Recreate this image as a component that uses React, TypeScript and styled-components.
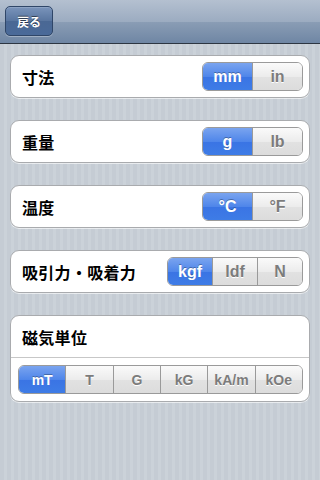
import React, { useState } from "react";
import styled, { createGlobalStyle, css } from "styled-components";

const Global = createGlobalStyle`
  html, body { margin: 0; padding: 0; }
  body {
    width: 320px;
    height: 480px;
    overflow: hidden;
    font-family: "Noto Sans CJK JP", "Liberation Sans", Arial, sans-serif;
  }
`;

const Screen = styled.div`
  width: 320px;
  height: 480px;
  display: flex;
  flex-direction: column;
  background: repeating-linear-gradient(
    90deg,
    #c5ccd4 0px,
    #c5ccd4 4px,
    #cbd2d9 4px,
    #cbd2d9 7px
  );
`;

const NavBar = styled.div`
  height: 43px;
  flex: none;
  border-bottom: 1px solid #2d3642;
  background: linear-gradient(
    180deg,
    #b4c0d0 0%,
    #9cacc1 50%,
    #8a9db5 51%,
    #6f86a4 100%
  );
  display: flex;
  align-items: center;
  padding: 0 5px;
  box-sizing: content-box;
`;

const BackButton = styled.button`
  width: 48px;
  height: 30px;
  margin-top: -1px;
  border-radius: 5px;
  border: 1px solid #2f4668;
  background: linear-gradient(180deg, #7a94bb 0%, #58759f 50%, #4a6894 51%, #4a6a99 100%);
  box-shadow: 0 1px 0 rgba(255, 255, 255, 0.3), inset 0 1px 0 rgba(255, 255, 255, 0.15);
  color: #fff;
  font-family: "Noto Sans CJK JP", sans-serif;
  font-weight: 700;
  font-size: 12px;
  text-shadow: 0 -1px 0 rgba(0, 0, 0, 0.5);
  padding: 0;
  display: flex;
  align-items: center;
  justify-content: center;
`;

const Content = styled.div`
  display: flex;
  flex-direction: column;
  gap: 22px;
  padding: 11px 10px 0;
`;

const Card = styled.div`
  background: #fff;
  border: 1px solid #a9abae;
  border-radius: 9px;
  box-shadow: 0 1px 0 rgba(255, 255, 255, 0.6);
  display: flex;
  flex-direction: column;
`;

const Row = styled.div`
  height: 41px;
  display: flex;
  align-items: center;
  justify-content: space-between;
  padding: 0 6px 0 11px;
`;

const Divider = styled.div`
  height: 1px;
  background: #c7c7c7;
`;

const Label = styled.div`
  font-family: "Noto Sans CJK JP", sans-serif;
  font-weight: 700;
  font-size: 16px;
  color: #000;
  letter-spacing: 0.3px;
`;

const Seg = styled.div<{ $w: number }>`
  display: flex;
  height: 29px;
  width: ${(p) => p.$w}px;
  border-radius: 6px;
  border: 1px solid #9a9a9a;
  overflow: hidden;
  box-sizing: border-box;
`;

const SegBtn = styled.button<{ $on: boolean }>`
  flex: 1;
  border: none;
  border-left: 1px solid #9a9a9a;
  padding: 0;
  font-family: "Liberation Sans", Arial, sans-serif;
  font-weight: 700;
  font-size: 16px;
  &:first-child { border-left: none; }
  ${(p) =>
    p.$on
      ? css`
          color: #fff;
          background: linear-gradient(180deg, #7aa4ef 0%, #4f86ea 50%, #3a74e4 51%, #3e7ce6 100%);
          text-shadow: 0 -1px 0 rgba(0, 0, 0, 0.3);
          border-color: #2f5fb8;
        `
      : css`
          color: #7c7c7c;
          background: linear-gradient(180deg, #fafafa 0%, #ececec 50%, #e2e2e2 51%, #dcdcdc 100%);
          text-shadow: 0 1px 0 #fff;
        `}
`;

const SmallSegBtn = styled(SegBtn)`
  font-size: 14px;
`;

type SegProps = { opts: string[]; w: number; small?: boolean };

function Segmented({ opts, w, small }: SegProps) {
  const [sel, setSel] = useState(0);
  const B = small ? SmallSegBtn : SegBtn;
  return (
    <Seg $w={w}>
      {opts.map((o, i) => (
        <B key={o} $on={i === sel} onClick={() => setSel(i)}>
          {o}
        </B>
      ))}
    </Seg>
  );
}

const MagRow = styled.div`
  height: 43px;
  display: flex;
  align-items: center;
  padding: 0 6px 0 7px;
`;

export default function App() {
  return (
    <>
      <Global />
      <Screen>
        <NavBar>
          <BackButton>戻る</BackButton>
        </NavBar>
        <Content>
          <Card>
            <Row>
              <Label>寸法</Label>
              <Segmented opts={["mm", "in"]} w={101} />
            </Row>
          </Card>
          <Card>
            <Row>
              <Label>重量</Label>
              <Segmented opts={["g", "lb"]} w={101} />
            </Row>
          </Card>
          <Card>
            <Row>
              <Label>温度</Label>
              <Segmented opts={["°C", "°F"]} w={101} />
            </Row>
          </Card>
          <Card>
            <Row>
              <Label>吸引力・吸着力</Label>
              <Segmented opts={["kgf", "ldf", "N"]} w={136} />
            </Row>
          </Card>
          <Card>
            <Row>
              <Label>磁気単位</Label>
            </Row>
            <Divider />
            <MagRow>
              <Segmented opts={["mT", "T", "G", "kG", "kA/m", "kOe"]} w={285} small />
            </MagRow>
          </Card>
        </Content>
      </Screen>
    </>
  );
}
